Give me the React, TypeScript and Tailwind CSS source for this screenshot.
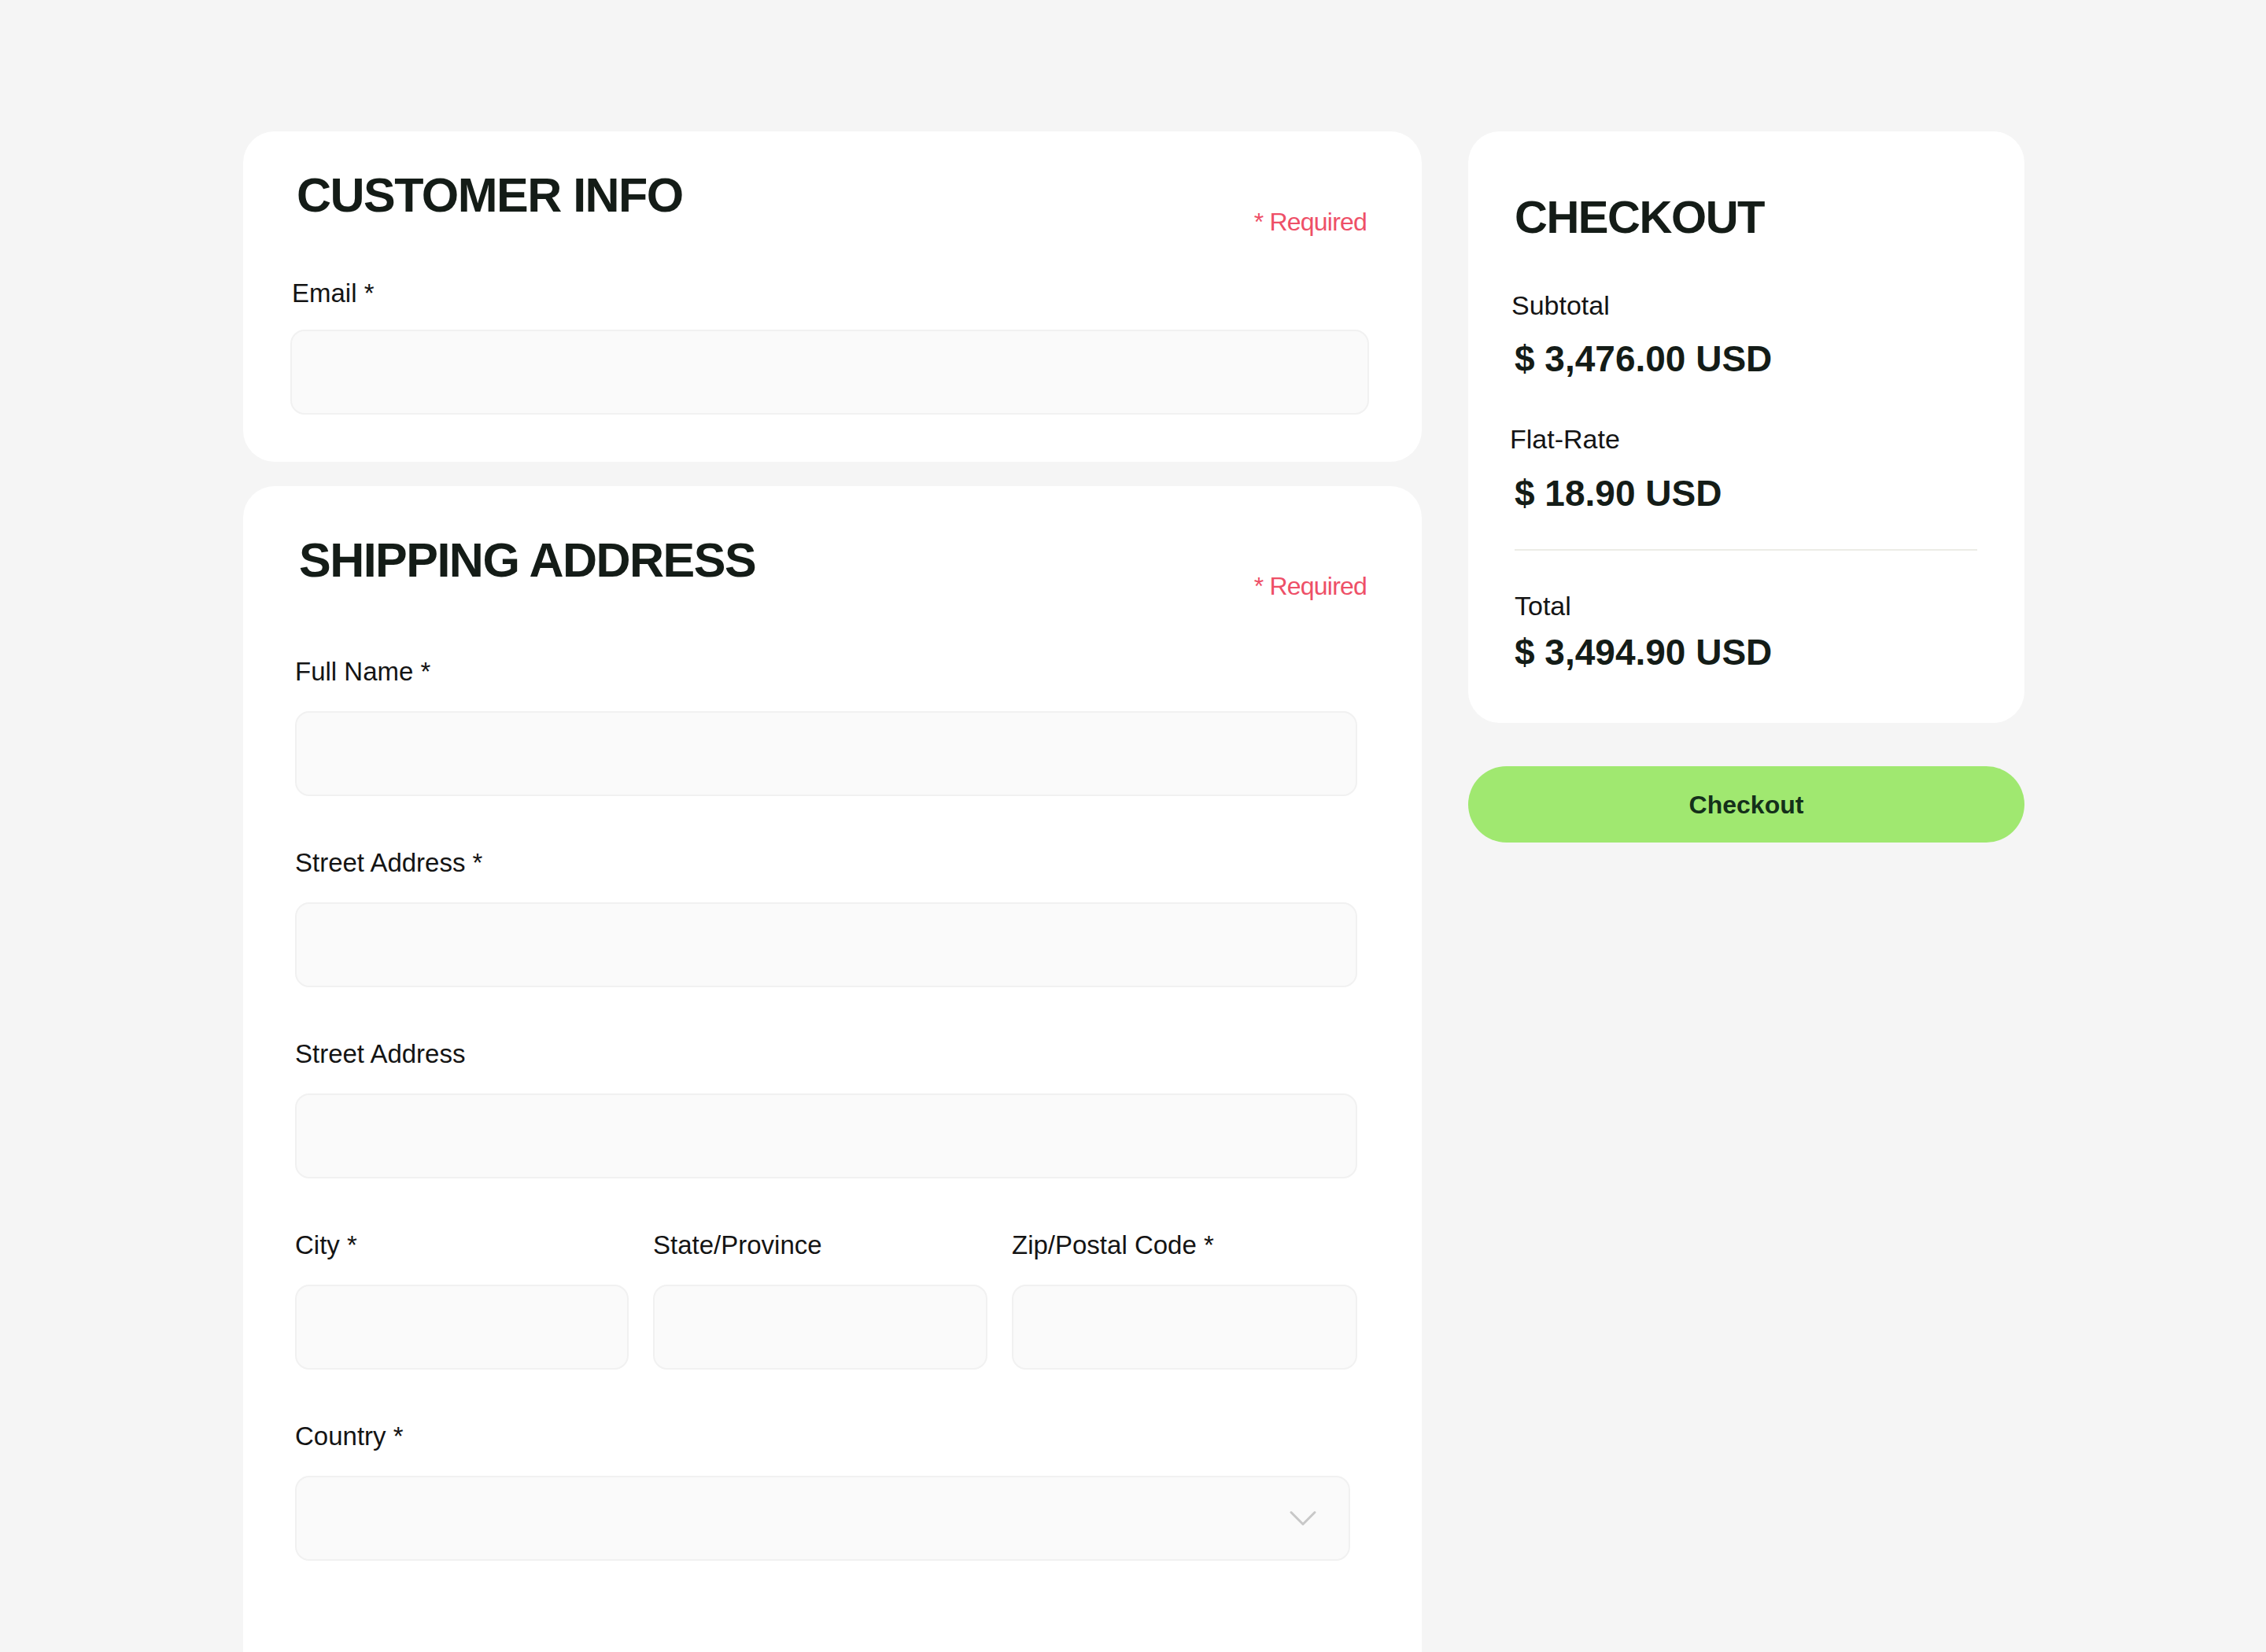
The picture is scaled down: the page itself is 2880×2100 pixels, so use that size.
import { ChevronDown } from "lucide-react";

const font = { fontFamily: '"Liberation Sans", Arial, sans-serif' };

const labelCls = "block text-[33px] leading-none text-[#141414]";
const inputCls = "block w-full h-[108px] mt-[34px] rounded-[18px] border-2 border-[#f1f1f1] bg-[#fafafa]";

const Field = ({ label, className = "" }: { label: string; className?: string }) => (
  <div className={className}>
    <label className={labelCls}>{label}</label>
    <div className={inputCls} />
  </div>
);

const Heading = ({ children, className = "" }: { children: string; className?: string }) => (
  <h2 className={"font-bold leading-none tracking-tight text-[#141c17] " + className}>{children}</h2>
);

const Required = ({ className = "" }: { className?: string }) => (
  <span className={"text-[32px] leading-none text-[#ee4f67] tracking-tight " + className}>* Required</span>
);

export default function App() {
  return (
    <div style={font} className="bg-[#f5f5f5] pt-[167px] pl-[309px] flex gap-[59px] overflow-hidden h-[2100px]">
      <div className="w-[1498px] flex flex-col gap-[31px]">
        <section className="bg-white rounded-[40px] pt-[51px] pb-[60px] pl-[60px] pr-[67px]">
          <div className="flex justify-between items-start pl-[8px] pr-[3px]">
            <Heading className="text-[61px]">CUSTOMER INFO</Heading>
            <Required className="mt-[48px]" />
          </div>
          <div className="mt-[58px]">
            <label className={labelCls + " pl-[2px]"}>Email *</label>
            <div className={inputCls + " !mt-[30px]"} />
          </div>
        </section>

        <section className="bg-white rounded-[40px] pt-[64px] pb-[200px] pl-[64px] pr-[82px]">
          <div className="flex justify-between items-start pl-[7px]">
            <Heading className="text-[61px]">SHIPPING ADDRESS</Heading>
            <Required className="mt-[47px] -mr-[12px]" />
          </div>
          <div className="mt-[76px] flex flex-col gap-[68px] pl-[2px]">
            <Field label="Full Name *" />
            <Field label="Street Address *" />
            <Field label="Street Address" />
            <div className="grid grid-cols-[424px_425px_439px] gap-[31px]">
              <Field label="City *" />
              <Field label="State/Province" />
              <Field label="Zip/Postal Code *" />
            </div>
            <div className="pr-[9px]">
              <label className={labelCls}>Country *</label>
              <div className={inputCls + " flex items-center justify-end pr-[28px]"}>
                <ChevronDown size={60} strokeWidth={1.2} className="text-[#c8c8c8]" />
              </div>
            </div>
          </div>
        </section>
      </div>

      <div className="w-[707px]">
        <section className="bg-white rounded-[40px] pt-[80px] pb-[67px] pl-[59px] pr-[60px]">
          <Heading className="text-[58px] tracking-normal">CHECKOUT</Heading>
          <p className="mt-[66px] text-[34px] leading-none text-[#141414] -ml-[4px]">Subtotal</p>
          <p className="mt-[28px] text-[46px] font-bold leading-none text-[#141c17]">$ 3,476.00 USD</p>
          <p className="mt-[62px] text-[34px] leading-none text-[#141414] -ml-[6px]">Flat-Rate</p>
          <p className="mt-[29px] text-[46px] font-bold leading-none text-[#141c17]">$ 18.90 USD</p>
          <div className="mt-[48px] h-[2px] bg-[#ecece6]" />
          <p className="mt-[53px] text-[34px] leading-none text-[#141414]">Total</p>
          <p className="mt-[19px] text-[46px] font-bold leading-none text-[#141c17]">$ 3,494.90 USD</p>
        </section>
        <button className="mt-[55px] w-full h-[97px] rounded-full bg-[#a0e870] text-[32px] font-bold text-[#14301a]">
          Checkout
        </button>
      </div>
    </div>
  );
}
